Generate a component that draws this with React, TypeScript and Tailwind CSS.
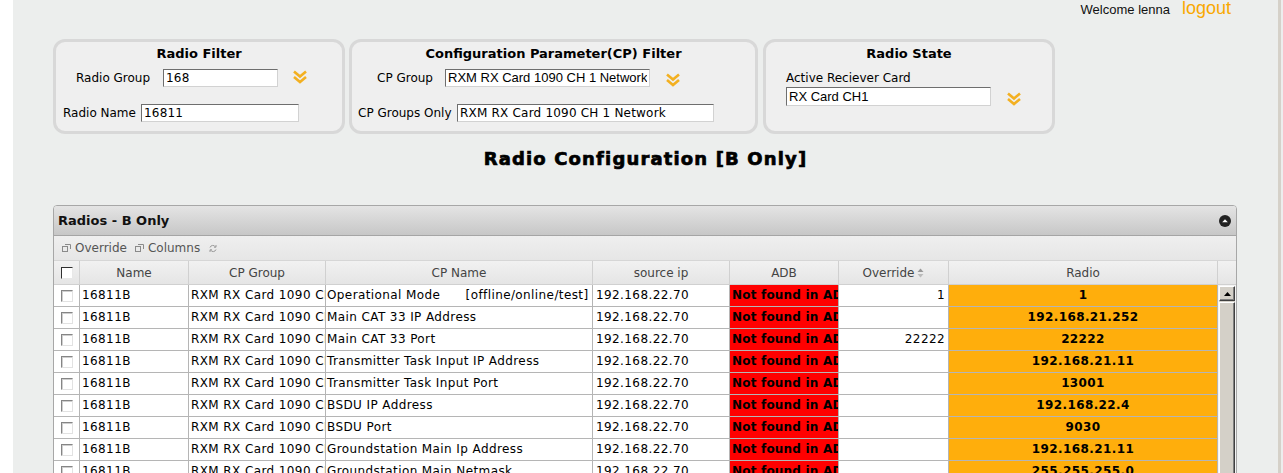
import React from 'react'

const rows = [
  { cp: 'Operational Mode      [offline/online/test]', ov: '1', radio: '1' },
  { cp: 'Main CAT 33 IP Address', ov: '', radio: '192.168.21.252' },
  { cp: 'Main CAT 33 Port', ov: '22222', radio: '22222' },
  { cp: 'Transmitter Task Input IP Address', ov: '', radio: '192.168.21.11' },
  { cp: 'Transmitter Task Input Port', ov: '', radio: '13001' },
  { cp: 'BSDU IP Address', ov: '', radio: '192.168.22.4' },
  { cp: 'BSDU Port', ov: '', radio: '9030' },
  { cp: 'Groundstation Main Ip Address', ov: '', radio: '192.168.21.11' },
  { cp: 'Groundstation Main Netmask', ov: '', radio: '255.255.255.0' },
  { cp: 'Groundstation Main Gateway', ov: '', radio: '192.168.21.1' },
]

function Chevrons({ className = '' }: { className?: string }) {
  return (
    <svg width="16" height="14" viewBox="0 0 16 14" className={className}>
      <path d="M2 1.5 L8 6.5 L14 1.5" fill="none" stroke="#f3b021" strokeWidth="2.6" />
      <path d="M2 7 L8 12 L14 7" fill="none" stroke="#f3b021" strokeWidth="2.6" />
    </svg>
  )
}

function Field({ value, w, h = 18, arial = false }: { value: string; w: number; h?: number; arial?: boolean }) {
  return (
    <input
      readOnly
      value={value}
      style={{ width: w, height: h }}
      className={
        'bg-white border border-t-[#6e6e6e] border-l-[#6e6e6e] border-r-[#d2d2d2] border-b-[#d2d2d2] px-[2px] text-black outline-none ' +
        (arial ? "font-['Liberation_Sans',sans-serif] text-[13px]" : 'text-[12px] tracking-[0.2px]')
      }
    />
  )
}

function Panel({ title, w, children }: { title: string; w: number; children: React.ReactNode }) {
  return (
    <div style={{ width: w }} className="h-[95px] rounded-[12px] border-[3px] border-[#d8d8d8] bg-[#efefef] pt-[4px]">
      <div className="text-center text-[13px] leading-[16px] font-bold text-black">{title}</div>
      {children}
    </div>
  )
}

function Check({ dark = false }: { dark?: boolean }) {
  return (
    <span
      className={
        'block w-[12px] h-[12px] bg-white border ' +
        (dark
          ? 'border-t-[#303030] border-l-[#303030] border-r-[#e8e8e8] border-b-[#e8e8e8]'
          : 'border-t-[#858585] border-l-[#858585] border-r-[#e2e2e2] border-b-[#e2e2e2] shadow-[inset_1px_1px_0_#cfcfcf]')
      }
    />
  )
}

function WinIcon() {
  return (
    <svg width="9" height="8" viewBox="0 0 9 8" className="mr-[4px]">
      <rect x="0.5" y="2.5" width="5" height="5" fill="none" stroke="#8a8a8a" />
      <path d="M3 0.5 H8.5 V5" fill="none" stroke="#8a8a8a" />
    </svg>
  )
}

const headCols = 'grid grid-cols-[26px_109px_137px_267px_137px_109px_110px_269px_18px]'
const rowCols = 'grid grid-cols-[26px_109px_137px_267px_137px_109px_110px_269px]'

export default function App() {
  return (
    <div className="w-[1283px] h-[473px] overflow-hidden flex bg-white font-['DejaVu_Sans',sans-serif] text-black">
      <div className="w-[13px] shrink-0 bg-white" />
      <div className="w-[1265px] shrink-0 bg-[#eceeed]">
        <div className="h-[20px] flex items-baseline justify-end pr-[47px]">
          <span className="font-['Liberation_Sans',sans-serif] text-[13px] leading-[17px] text-[#111]">Welcome lenna</span>
          <span className="ml-[12px] font-['Liberation_Sans',sans-serif] text-[18px] leading-[17px] text-[#f9a800]">logout</span>
        </div>

        <div className="pl-[40px] pt-[19px] flex">
          <Panel title="Radio Filter" w={292}>
            <div className="mt-[7px] flex items-center h-[18px]">
              <span className="ml-[20px] w-[87px] text-[12px]">Radio Group</span>
              <Field value="168" w={115} />
              <Chevrons className="ml-[14px] mt-[-3px]" />
            </div>
            <div className="mt-[17px] flex items-center h-[18px]">
              <span className="ml-[7px] w-[78px] text-[12px]">Radio Name</span>
              <Field value="16811" w={158} />
            </div>
          </Panel>
          <div className="w-[4px]" />
          <Panel title="Configuration Parameter(CP) Filter" w={409}>
            <div className="mt-[7px] flex items-center h-[18px]">
              <span className="ml-[25px] w-[68px] text-[12px]">CP Group</span>
              <Field value="RXM RX Card 1090 CH 1 Network" w={205} arial />
              <Chevrons className="ml-[15px] mt-[4px]" />
            </div>
            <div className="mt-[17px] flex items-center h-[18px]">
              <span className="ml-[6px] w-[99px] text-[12px] whitespace-nowrap">CP Groups Only</span>
              <Field value="RXM RX Card 1090 CH 1 Network" w={257} />
            </div>
          </Panel>
          <div className="w-[5px]" />
          <Panel title="Radio State" w={292}>
            <div className="mt-[9px] ml-[20px] text-[12px] leading-[15px]">Active Reciever Card</div>
            <div className="mt-[1px] ml-[20px] flex items-center">
              <Field value="RX Card CH1" w={205} h={19} arial />
              <Chevrons className="ml-[15px] mt-[4px]" />
            </div>
          </Panel>
        </div>

        <div className="mt-[14px] text-center text-[18px] leading-[22px] font-bold tracking-[1.15px] [-webkit-text-stroke:0.7px_#000]">
          Radio Configuration [B Only]
        </div>

        <div className="mt-[35px] ml-[40px] w-[1184px] border border-[#a7a7a7] rounded-t-[4px] bg-white">
          <div className="h-[30px] flex items-center justify-between px-[4px] bg-gradient-to-b from-[#e4e4e4] to-[#c7c7c7] border-b border-[#a5a5a5] rounded-t-[3px]">
            <span className="text-[13px] font-bold text-[#111]">Radios - B Only</span>
            <svg width="12" height="12" viewBox="0 0 12 12" className="mr-[1px]">
              <circle cx="6" cy="6" r="6" fill="#222" />
              <path d="M3.2 7.3 L6 4.3 L8.8 7.3 Z" fill="#fff" />
            </svg>
          </div>
          <div className="h-[25px] flex items-center pl-[8px] bg-gradient-to-b from-[#efefef] to-[#e6e6e6] border-b border-[#d6d6d6] text-[12px] text-[#555]">
            <WinIcon />
            <span>Override</span>
            <span className="w-[8px]" />
            <WinIcon />
            <span>Columns</span>
            <svg width="8" height="9" viewBox="0 0 8 9" className="ml-[9px]">
              <path d="M6.5 3 A3 3 0 0 0 1 3.5 M1.5 6 A3 3 0 0 0 7 5.5" fill="none" stroke="#9a9a9a" strokeWidth="1" />
              <path d="M5 3.2 L7 3.2 L7 1" fill="none" stroke="#9a9a9a" strokeWidth="1" />
              <path d="M3 5.8 L1 5.8 L1 8" fill="none" stroke="#9a9a9a" strokeWidth="1" />
            </svg>
          </div>
          <div className={headCols + ' h-[24px] border-b border-[#d0d0d0] bg-gradient-to-b from-[#f1f1f1] to-[#e5e5e5] text-[12px] text-[#444]'}>
            <div className="border-r border-[#d0d0d0] flex items-center justify-center"><Check dark /></div>
            <div className="border-r border-[#d0d0d0] flex items-center justify-center">Name</div>
            <div className="border-r border-[#d0d0d0] flex items-center justify-center">CP Group</div>
            <div className="border-r border-[#d0d0d0] flex items-center justify-center">CP Name</div>
            <div className="border-r border-[#d0d0d0] flex items-center justify-center">source ip</div>
            <div className="border-r border-[#d0d0d0] flex items-center justify-center">ADB</div>
            <div className="border-r border-[#d0d0d0] flex items-center justify-center">
              Override
              <svg width="7" height="10" viewBox="0 0 7 10" className="ml-[3px]">
                <path d="M0.5 4 L3.5 0.5 L6.5 4 Z" fill="#999" />
                <path d="M0.5 6 L3.5 9.5 L6.5 6 Z" fill="#bbb" />
              </svg>
            </div>
            <div className="border-r border-[#d0d0d0] flex items-center justify-center">Radio</div>
            <div />
          </div>
          <div className="flex">
            <div className="w-[1164px]">
              {rows.map((r, i) => (
                <div key={i} className={rowCols + ' h-[22px] border-b border-[#b5b5b5] text-[12px] leading-[21px] tracking-[0.4px]'}>
                  <div className="border-r border-[#b5b5b5] flex items-center justify-center"><Check /></div>
                  <div className="border-r border-[#b5b5b5] pl-[2px] overflow-hidden whitespace-nowrap">16811B</div>
                  <div className="border-r border-[#b5b5b5] pl-[2px] overflow-hidden whitespace-nowrap">RXM RX Card 1090 CH 1 Network</div>
                  <div className="border-r border-[#b5b5b5] pl-[1px] overflow-hidden whitespace-pre">{r.cp}</div>
                  <div className="border-r border-[#b5b5b5] pl-[3px] overflow-hidden whitespace-nowrap">192.168.22.70</div>
                  <div className="border-r border-[#b5b5b5] bg-[#ff0000] pl-[2px] font-bold tracking-[0.2px] overflow-hidden whitespace-nowrap">Not found in ADB</div>
                  <div className="border-r border-[#b5b5b5] pr-[3px] text-right overflow-hidden whitespace-nowrap">{r.ov}</div>
                  <div className="border-r border-[#b5b5b5] bg-[#ffae0c] text-center font-bold overflow-hidden whitespace-nowrap">{r.radio}</div>
                </div>
              ))}
            </div>
            <div className="w-[18px] bg-[#f4f4f4] pl-[1px] pt-[1px]">
              <div className="w-[16px] h-[210px] bg-[#d4d0c8] flex flex-col">
                <div className="h-[15px] border border-t-white border-l-white border-r-[#404040] border-b-[#404040] shadow-[inset_-1px_-1px_0_#808080] flex items-center justify-center">
                  <svg width="7" height="4" viewBox="0 0 7 4"><path d="M0 4 L3.5 0 L7 4 Z" fill="#000" /></svg>
                </div>
                <div className="mt-[1px] flex-1 border border-t-white border-l-white border-r-[#404040] border-b-[#404040] shadow-[inset_-1px_-1px_0_#808080]" />
              </div>
            </div>
          </div>
        </div>
      </div>
      <div className="w-[3px] shrink-0 bg-[#d5d1c9]" />
      <div className="w-[2px] shrink-0 bg-[#ededed]" />
    </div>
  )
}
